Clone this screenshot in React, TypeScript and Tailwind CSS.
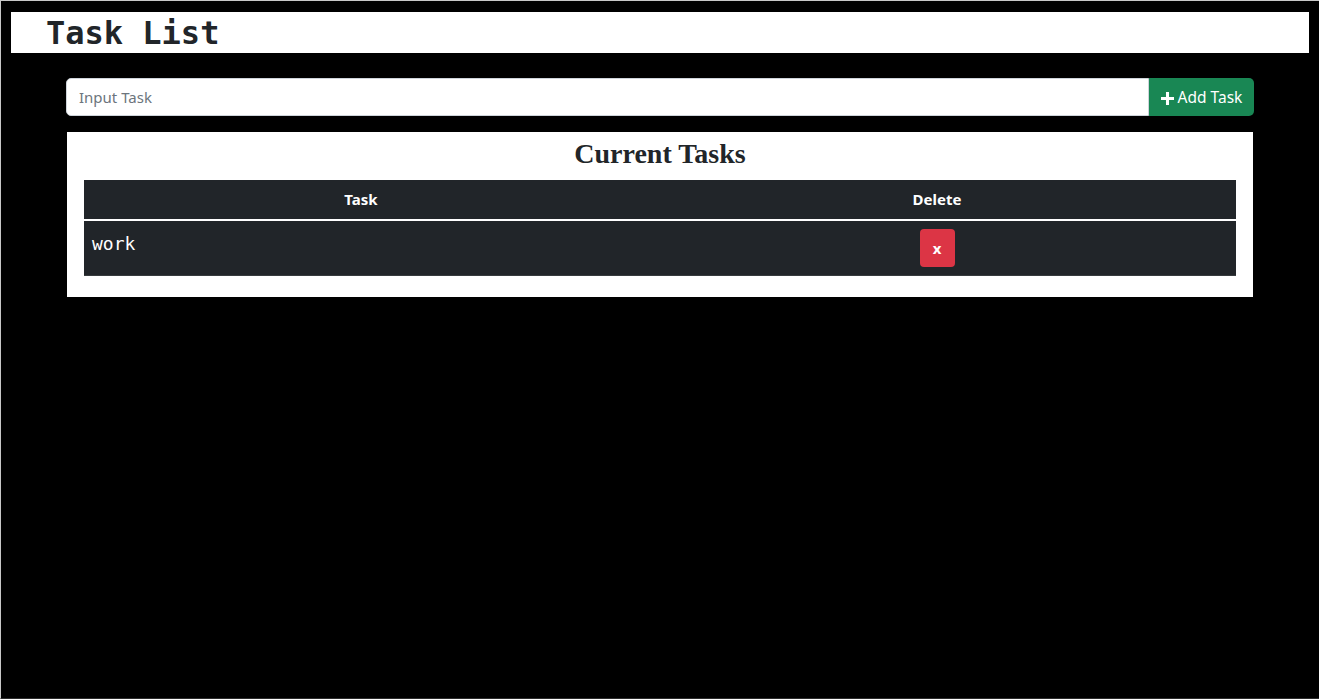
const sans = "font-['Noto_Sans',_'Open_Sans',_sans-serif]";

function PlusIcon() {
  return (
    <svg width="13" height="13" viewBox="0 0 12 12" className="mr-[4px]" aria-hidden="true">
      <path d="M4.6 0h2.8v4.6H12v2.8H7.4V12H4.6V7.4H0V4.6h4.6z" fill="currentColor" />
    </svg>
  );
}

export default function App() {
  const tasks = ['work'];

  return (
    <div className="flex h-[699px] flex-col overflow-hidden border-l border-t border-b border-l-[#c8c8c8] border-t-[#c8c8c8] border-b-[#2e2e2e] bg-black">
      <header className="mx-[10px] mt-[11px] flex h-[41px] items-center bg-white pl-[35px]">
        <h1 className="font-['DejaVu_Sans_Mono',_monospace] text-[32px] font-bold leading-none text-[#212529]">
          Task List
        </h1>
      </header>

      <div className={`ml-[65px] mr-[65px] mt-[25px] flex h-[38px] ${sans}`}>
        <input
          type="text"
          placeholder="Input Task"
          className="min-w-0 flex-1 rounded-l-[5px] border border-[#ced4da] bg-white px-3 text-[15px] text-[#212529] outline-none placeholder:text-[#6c757d]"
        />
        <button
          type="button"
          className="flex w-[105px] items-center justify-center rounded-r-[5px] bg-[#198754] pt-[2px] text-[15.5px] text-white"
        >
          <PlusIcon />
          Add Task
        </button>
      </div>

      <section className="ml-[66px] mr-[66px] mt-[16px] bg-white px-[17px] pb-[21px]">
        <div className="flex h-[48px] items-center justify-center pb-[5px]">
          <h2 className="font-['Liberation_Serif',_serif] text-[28px] font-bold leading-none text-[#212529]">
            Current Tasks
          </h2>
        </div>
        <table className={`w-full border-collapse bg-[#212529] text-white ${sans}`}>
          <thead>
            <tr className="border-b-2 border-white">
              <th className="h-[40px] w-[554px] px-2 text-center text-[15px] font-bold">Task</th>
              <th className="h-[40px] px-2 text-center text-[15px] font-bold">Delete</th>
            </tr>
          </thead>
          <tbody>
            {tasks.map((task) => (
              <tr key={task} className="border-b border-[#373b3e]">
                <td className="px-2 pt-[11px] pb-2 align-top font-['DejaVu_Sans_Mono',_monospace] text-[18px] leading-6">
                  {task}
                </td>
                <td className="p-2 text-center">
                  <button
                    type="button"
                    className="inline-flex h-[38px] w-[35px] items-center justify-center rounded-[4px] bg-[#dc3545] text-[15px] font-bold text-white"
                  >
                    x
                  </button>
                </td>
              </tr>
            ))}
          </tbody>
        </table>
      </section>
    </div>
  );
}
